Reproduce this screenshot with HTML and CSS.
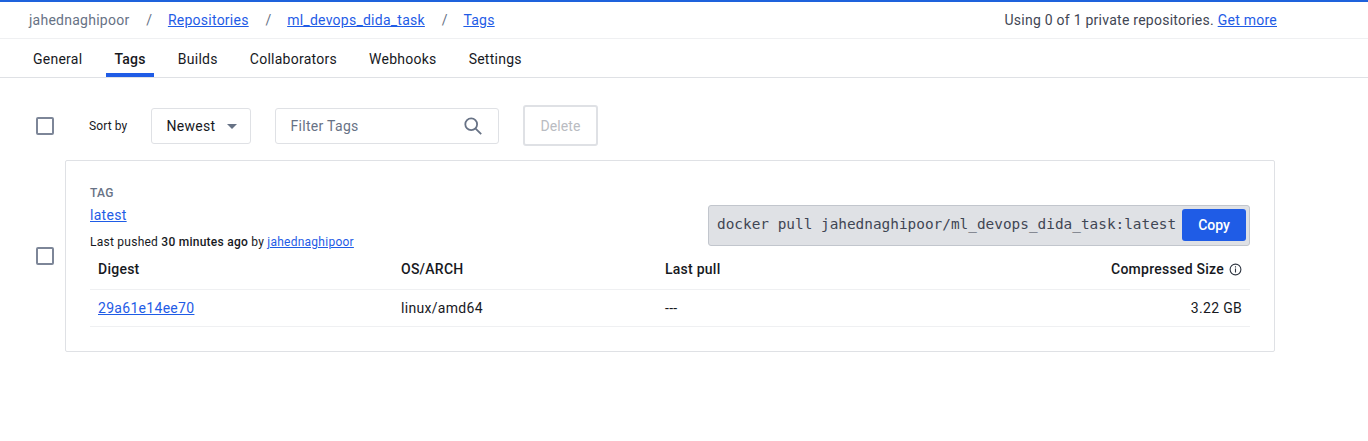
FILE: index.html
```html
<!DOCTYPE html>
<html lang="en">
<head>
<meta charset="utf-8">
<title>Tags</title>
<link rel="stylesheet" href="styles.css">
</head>
<body>
<header class="crumbs">
  <nav class="crumb-list">
    <span class="crumb-user">jahednaghipoor</span><span class="sep">/</span>
    <a href="#">Repositories</a><span class="sep">/</span>
    <a href="#">ml_devops_dida_task</a><span class="sep">/</span>
    <a href="#">Tags</a>
  </nav>
  <div class="usage">Using 0 of 1 private repositories. <a href="#">Get more</a></div>
</header>
<nav class="tabs">
  <a class="tab" href="#">General</a>
  <a class="tab active" href="#">Tags</a>
  <a class="tab" href="#">Builds</a>
  <a class="tab" href="#">Collaborators</a>
  <a class="tab" href="#">Webhooks</a>
  <a class="tab" href="#">Settings</a>
</nav>
<section class="toolbar">
  <span class="check"></span>
  <span class="sort-label">Sort by</span>
  <div class="select">Newest<svg class="caret" width="10" height="5" viewBox="0 0 10 5"><path d="M0 0h10L5 5z" fill="#677285"/></svg></div>
  <div class="filter">Filter Tags
    <svg class="search" width="20" height="20" viewBox="0 0 20 20" fill="none" stroke="#677285" stroke-width="1.8"><circle cx="8.2" cy="8.2" r="5.9"/><path d="M12.6 12.6l5.6 5.6"/></svg>
  </div>
  <button class="delete" type="button">Delete</button>
</section>
<section class="row">
  <span class="check"></span>
  <article class="card">
    <div class="card-head">
      <div class="tag-info">
        <div class="tag-label">TAG</div>
        <a class="tag-name" href="#">latest</a>
        <div class="pushed">Last pushed <b>30 minutes ago</b> by <a href="#">jahednaghipoor</a></div>
      </div>
      <div class="pull">
        <code>docker pull jahednaghipoor/ml_devops_dida_task:latest</code>
        <button class="copy" type="button">Copy</button>
      </div>
    </div>
    <div class="table">
      <div class="tr th">
        <span>Digest</span><span>OS/ARCH</span><span>Last pull</span>
        <span class="size">Compressed Size<svg class="info" width="13" height="13" viewBox="0 0 13 13" fill="none" stroke="#2f3642" stroke-width="1.1"><circle cx="6.5" cy="6.5" r="5.4"/><path d="M6.5 5.6v3.8M6.5 3.3v1.2"/></svg></span>
      </div>
      <div class="tr td">
        <span><a href="#">29a61e14ee70</a></span><span>linux/amd64</span><span>---</span><span class="size">3.22 GB</span>
      </div>
    </div>
  </article>
</section>
</body>
</html>
```

FILE: styles.css
```css
* { box-sizing: border-box; }
html, body { margin: 0; padding: 0; background: #fff; }
body {
  font-family: Roboto, "Liberation Sans", sans-serif;
  font-size: 14px;
  color: #17191e;
  height: 441px;
  overflow: hidden;
}
a { color: #1f5ce6; text-decoration: underline; }

.crumbs {
  height: 39px;
  border-top: 2px solid #1e62dc;
  border-bottom: 1px solid #eff0f2;
  display: flex;
  align-items: center;
  justify-content: space-between;
  padding: 0 91px 0 29px;
  letter-spacing: 0.25px;
}
.crumb-list { display: flex; align-items: center; }
.crumb-user { color: #677285; }
.sep { color: #677285; margin: 0 16.75px; width: 5px; }
.usage { color: #3f4654; }

.tabs {
  height: 39px;
  border-bottom: 1px solid #dfe1e5;
  display: flex;
  padding-left: 33px;
  gap: 32.1px;
}
.tab {
  color: #17191e;
  text-decoration: none;
  line-height: 40px;
  height: 38px;
  position: relative;
  letter-spacing: 0.25px;
}
.tab.active { font-weight: 500; }
.tab.active::after {
  content: "";
  position: absolute;
  left: -8px;
  right: -8px;
  bottom: 0;
  height: 4px;
  background: #1f5ce6;
}

.toolbar {
  display: flex;
  align-items: center;
  padding: 14px 0 0 36px;
  height: 82px;
}
.check {
  display: block;
  width: 18px;
  height: 18px;
  flex: none;
  border: 2px solid #7d8698;
  border-radius: 2px;
}
.sort-label { font-size: 12px; margin-left: 35px; width: 62px; letter-spacing: 0.1px; }
.select, .filter {
  height: 36px;
  border: 1px solid #dfe1e5;
  border-radius: 3px;
  display: flex;
  align-items: center;
}
.select { width: 100px; padding: 0 13px 0 14.5px; justify-content: space-between; letter-spacing: 0.3px; }
.filter {
  width: 224px;
  margin-left: 24px;
  padding: 0 15px 0 14.5px;
  justify-content: space-between;
  color: #677285;
  letter-spacing: 0.3px;
}
.delete {
  margin: -1px 0 0 24px;
  width: 75px;
  height: 41px;
  background: #fff;
  border: 2px solid #dfe1e5;
  border-radius: 3px;
  color: #b9bcc2;
  font: 400 14px Roboto, sans-serif;
  letter-spacing: 0.1px;
}

.row {
  display: flex;
  align-items: center;
  padding-left: 36px;
}
.row .check { margin-right: 11px; }
.card {
  width: 1210px;
  height: 192px;
  border: 1px solid #dfe1e5;
  border-radius: 2px;
  padding: 24px 24px 0;
}
.card-head {
  display: flex;
  justify-content: space-between;
  height: 66px;
}
.tag-info { align-self: flex-start; }
.tag-label { font-size: 12px; font-weight: 500; color: #677285; letter-spacing: 0.25px; line-height: 16px; }
.tag-name { display: block; line-height: 20px; margin-top: 4px; letter-spacing: 0.3px; }
.pushed { font-size: 12px; line-height: 16px; margin-top: 9px; letter-spacing: 0.25px; }
.pushed b { font-weight: 500; }
.pull {
  align-self: flex-end;
  width: 542px;
  height: 41px;
  margin-bottom: 5px;
  background: #dfe1e5;
  border: 1px solid #c2c6cd;
  border-radius: 3px;
  display: flex;
  align-items: flex-start;
  justify-content: space-between;
  padding: 3px 3px 0 8px;
}
.pull code {
  font-family: "DejaVu Sans Mono", "Liberation Mono", monospace;
  font-size: 14.4px;
  line-height: 30px;
  color: #3f4654;
}
.copy {
  width: 64px;
  height: 32px;
  background: #1f5ce6;
  color: #fff;
  border: 0;
  border-radius: 3px;
  font: 500 14px Roboto, sans-serif;
}

.tr {
  display: grid;
  grid-template-columns: 303px 264px 1fr auto;
  padding: 0 8px;
  align-items: center;
  border-bottom: 1px solid #eff0f2;
  height: 37px;
  letter-spacing: 0.25px;
}
.th { height: 39px; padding-bottom: 2px; font-weight: 500; }
.td { letter-spacing: 0.3px; }
.size { display: flex; align-items: center; gap: 5px; }
.info { display: block; }
```
